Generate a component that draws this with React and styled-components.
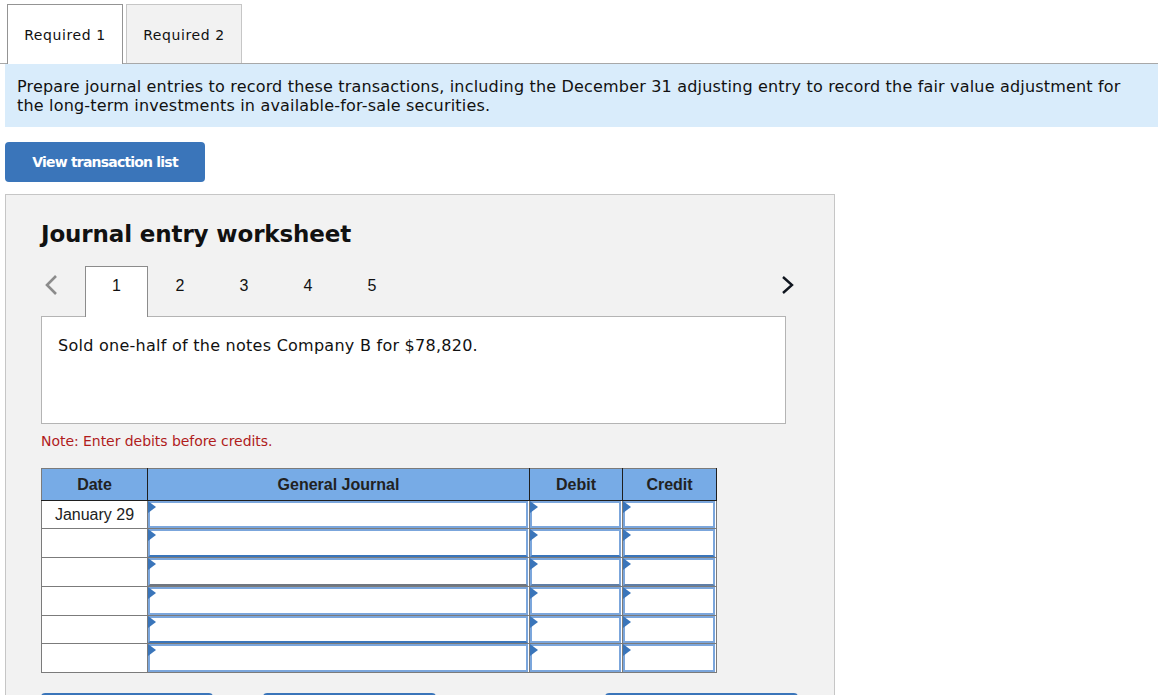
import styled, { createGlobalStyle } from 'styled-components';

const rows = [
  { date: 'January 29', height: 28, edge: '#7ba6dc', sideEdge: '#7ba6dc' },
  { date: '', height: 29, edge: '#3a75ba', sideEdge: '#3a75ba' },
  { date: '', height: 29, edge: '#6f7680', sideEdge: '#5f7ea6' },
  { date: '', height: 29, edge: '#7ba6dc', sideEdge: '#7ba6dc' },
  { date: '', height: 28, edge: '#3a75ba', sideEdge: '#7ba6dc' },
  { date: '', height: 29, edge: '#7ba6dc', sideEdge: '#7ba6dc' },
];

const steps = [1, 2, 3, 4, 5];

const App = () => (
  <Page>
    <GlobalStyle />
    <Tabs>
      <Tab $active>Required 1</Tab>
      <Tab>Required 2</Tab>
    </Tabs>
    <Banner>
      Prepare journal entries to record these transactions, including the December 31 adjusting
      entry to record the fair value adjustment for the long-term investments in
      available-for-sale securities.
    </Banner>
    <BlueButton>View transaction list</BlueButton>
    <Panel>
      <Title>Journal entry worksheet</Title>
      <StepBar>
        <Arrow>
          <svg width="16" height="24" viewBox="0 0 16 24">
            <path d="M13 3 L4 12 L13 21" fill="none" stroke="#8c8c8c" strokeWidth="2.6" />
          </svg>
        </Arrow>
        <Steps>
          {steps.map((n) => (
            <Step key={n} $active={n === 1}>{n}</Step>
          ))}
        </Steps>
        <NextArrow>
          <svg width="16" height="24" viewBox="0 0 16 24">
            <path d="M3 4 L12 12 L3 20" fill="none" stroke="#10161f" strokeWidth="2.4" />
          </svg>
        </NextArrow>
      </StepBar>
      <Description>Sold one-half of the notes Company B for $78,820.</Description>
      <Note>Note: Enter debits before credits.</Note>
      <Table>
        <colgroup>
          <col width="106" />
          <col width="382" />
          <col width="93" />
          <col width="94" />
        </colgroup>
        <thead>
          <tr>
            <Head>Date</Head>
            <Head>General Journal</Head>
            <Head>Debit</Head>
            <Head>Credit</Head>
          </tr>
        </thead>
        <tbody>
          {rows.map((row, i) => (
            <Row key={i} $height={row.height}>
              <DateCell>{row.date}</DateCell>
              {['journal', 'debit', 'credit'].map((name) => (
                <EntryCell key={name}>
                  <EntryBox $edge={name === 'journal' ? row.edge : row.sideEdge} />
                </EntryCell>
              ))}
            </Row>
          ))}
        </tbody>
      </Table>
      <Actions>
        <ActionButton $width={172} />
        <ActionButton $width={173} $left={50} />
        <ActionButton $width={193} $left={169} />
      </Actions>
    </Panel>
  </Page>
);

const GlobalStyle = createGlobalStyle`
  html, body {
    margin: 0;
    padding: 0;
    height: 100%;
    overflow: hidden;
    background: #fff;
  }
`;

const Page = styled.div`
  width: 1158px;
  height: 695px;
  overflow: hidden;
  font-family: "DejaVu Sans", Verdana, sans-serif;
  color: #111;
`;

const Tabs = styled.div`
  display: flex;
  gap: 3px;
  box-sizing: border-box;
  height: 64px;
  padding: 4px 0 0 7px;
  border-bottom: 1px solid #a8a8a8;
`;

const Tab = styled.div`
  box-sizing: border-box;
  width: 116px;
  height: ${(p) => (p.$active ? '60px' : '59px')};
  padding-top: 21px;
  text-align: center;
  font-size: 14px;
  line-height: 19px;
  letter-spacing: 0.6px;
  border: 1px solid ${(p) => (p.$active ? '#949494' : '#c6c6c6')};
  border-bottom: none;
  background: ${(p) => (p.$active ? '#fff' : '#f2f2f2')};
  position: relative;
  z-index: 1;
`;

const Banner = styled.div`
  box-sizing: border-box;
  height: 63px;
  margin-left: 5px;
  padding: 13px 30px 0 12px;
  background: #d9ecfb;
  font-size: 16px;
  line-height: 19px;
  letter-spacing: 0.18px;
`;

const BlueButton = styled.div`
  width: 200px;
  height: 40px;
  margin: 15px 0 12px 5px;
  background: #3a75ba;
  border-radius: 4px;
  color: #fff;
  font-weight: 700;
  font-size: 14px;
  line-height: 40px;
  text-align: center;
  letter-spacing: -0.8px;
`;

const Panel = styled.div`
  box-sizing: border-box;
  width: 830px;
  height: 560px;
  margin-left: 5px;
  padding: 22px 35px 0 35px;
  background: #f2f2f2;
  border: 1px solid #c6c6c6;
`;

const Title = styled.h2`
  margin: 0;
  font-size: 23px;
  line-height: 34px;
  font-weight: 700;
  letter-spacing: -0.13px;
  color: #111;
`;

const StepBar = styled.div`
  display: flex;
  align-items: flex-start;
  margin-top: 15px;
  height: 50px;
  width: 744px;
`;

const Arrow = styled.div`
  width: 44px;
  padding-left: 2px;
  box-sizing: border-box;
  margin-top: 7px;
  height: 24px;
`;

const Steps = styled.div`
  display: flex;
  flex: 1;
`;

const Step = styled.div`
  box-sizing: border-box;
  width: ${(p) => (p.$active ? '63px' : '64px')};
  height: 51px;
  text-align: center;
  font-family: "Liberation Sans", Arial, sans-serif;
  font-size: 16px;
  line-height: ${(p) => (p.$active ? '38px' : '40px')};
  color: #111;
  ${(p) =>
    p.$active &&
    `
    background: #fff;
    border: 1px solid #8c8c8c;
    border-bottom: none;
    position: relative;
    z-index: 1;
  `}
`;

const NextArrow = styled.div`
  width: 16px;
  margin-top: 7px;
  margin-right: -11px;
  margin-left: 1px;
  height: 24px;
`;

const Description = styled.div`
  box-sizing: border-box;
  width: 745px;
  height: 108px;
  padding: 19px 16px 0;
  background: #fff;
  border: 1px solid #b4b4b4;
  font-size: 16px;
  line-height: 20px;
  letter-spacing: 0.26px;
`;

const Note = styled.div`
  margin-top: 8px;
  font-size: 14px;
  line-height: 18px;
  letter-spacing: -0.05px;
  color: #b01c1c;
`;

const Table = styled.table`
  width: 675px;
  margin-top: 18px;
  border-collapse: collapse;
  table-layout: fixed;
  border: 1px solid #7b7b7b;
  font-family: "Liberation Sans", Arial, sans-serif;
`;

const Head = styled.th`
  height: 31px;
  padding: 0;
  background: #77abe6;
  border: 1px solid #1f1f1f;
  border-top-color: #7b7b7b;
  font-size: 16px;
  font-weight: 700;
  color: #222;
  &:first-child {
    border-left-color: #7b7b7b;
  }
`;

const Row = styled.tr`
  height: ${(p) => p.$height}px;
`;

const DateCell = styled.td`
  padding: 0;
  background: #fff;
  border: 1px solid #7b7b7b;
  text-align: center;
  font-size: 16px;
  color: #222;
`;

const EntryCell = styled.td`
  padding: 0;
  height: 1px;
  background: #fff;
  border-right: 1px solid #7b7b7b;
  border-bottom: 1px solid #7b7b7b;
`;

const EntryBox = styled.div`
  box-sizing: border-box;
  position: relative;
  height: 100%;
  margin-right: 1px;
  background: #fff;
  border: 2px solid #7ba6dc;
  border-bottom-color: ${(p) => p.$edge};
  &::before {
    content: '';
    position: absolute;
    top: -2px;
    left: -2px;
    border-left: 8px solid #3a75ba;
    border-top: 6px solid transparent;
    border-bottom: 6px solid transparent;
  }
`;

const Actions = styled.div`
  display: flex;
  margin-top: 20px;
`;

const ActionButton = styled.div`
  flex-shrink: 0;
  width: ${(p) => p.$width}px;
  height: 40px;
  margin-left: ${(p) => p.$left || 0}px;
  background: #3a75ba;
  border-radius: 4px;
`;

export default App;
